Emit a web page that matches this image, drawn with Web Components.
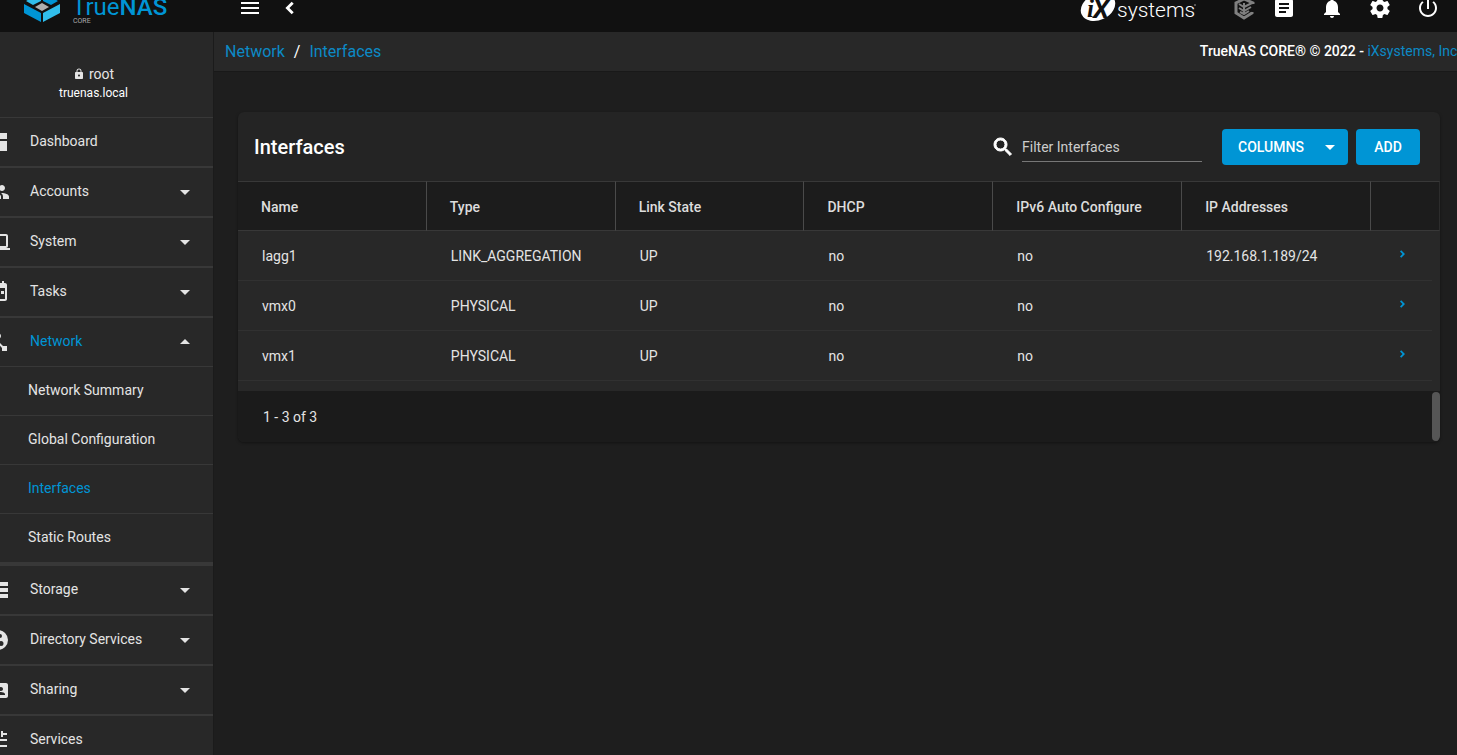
<!DOCTYPE html>
<html lang="en">
<head>
<meta charset="utf-8">
<title>TrueNAS - Interfaces</title>
<style>
  html, body { margin: 0; height: 100%; }
  body {
    --primary: #0095d5;
    --panel: #282828;
    --line: #383838;
    --fg: #e4e4e4;
    background: #1e1e1e; color: var(--fg);
    font: 14px/20px Roboto, "Liberation Sans", sans-serif;
    overflow: hidden;
  }
</style>
</head>
<body>
<nas-app>
  <nas-topbar slot="top"></nas-topbar>
  <nas-sidebar slot="side">
    <nas-item icon="dashboard" label="Dashboard"></nas-item>
    <nas-item icon="group" label="Accounts" menu></nas-item>
    <nas-item icon="laptop" label="System" menu></nas-item>
    <nas-item icon="calendar" label="Tasks" menu></nas-item>
    <nas-item icon="hub" label="Network" menu open>
      <nas-subitem>Network Summary</nas-subitem>
      <nas-subitem>Global Configuration</nas-subitem>
      <nas-subitem active>Interfaces</nas-subitem>
      <nas-subitem>Static Routes</nas-subitem>
    </nas-item>
    <nas-item icon="storage" label="Storage" menu></nas-item>
    <nas-item icon="directory" label="Directory Services" menu></nas-item>
    <nas-item icon="share" label="Sharing" menu></nas-item>
    <nas-item icon="tune" label="Services"></nas-item>
  </nas-sidebar>
  <nas-breadcrumb></nas-breadcrumb>
  <nas-table-card heading="Interfaces"></nas-table-card>
</nas-app>

<script>
const ICONS = {
  menu: 'M3 18h18v-2H3v2zm0-5h18v-2H3v2zm0-7v2h18V6H3z',
  back: 'M15.700 7.700L13.700 5.700 7.400 12l6.300 6.300 2-2L11.400 12z',
  next: 'M10.500 4.500L8 7l5 5-5 5 2.500 2.500L18 12z',
  task: 'M19 3h-4.180C14.400 1.840 13.300 1 12 1s-2.400.84-2.820 2H5c-1.100 0-2 .9-2 2v14c0 1.100.9 2 2 2h14c1.100 0 2-.9 2-2V5c0-1.100-.9-2-2-2zm-5 14H7v-2h7v2zm3-4H7v-2h10v2zm0-4H7V7h10v2z',
  bell: 'M12 22c1.100 0 2-.9 2-2h-4c0 1.100.89 2 2 2zm6-6v-5c0-3.070-1.640-5.640-4.500-6.320V4c0-.83-.67-1.500-1.500-1.500s-1.500.67-1.500 1.500v.68C7.630 5.360 6 7.920 6 11v5l-2 2v1h16v-1l-2-2z',
  gear: 'M19.43 12.98c.04-.32.07-.64.07-.98s-.03-.66-.07-.98l2.110-1.650c.19-.15.24-.42.12-.64l-2-3.460c-.12-.22-.39-.3-.61-.22l-2.490 1c-.52-.4-1.080-.73-1.690-.98l-.38-2.650C14.460 2.180 14.250 2 14 2h-4c-.25 0-.46.18-.49.42l-.38 2.650c-.61.25-1.170.59-1.690.98l-2.490-1c-.23-.09-.49 0-.61.22l-2 3.460c-.13.22-.07.49.12.64l2.110 1.650c-.04.32-.07.65-.07.98s.03.66.07.98l-2.110 1.650c-.19.15-.24.42-.12.64l2 3.460c.12.22.39.3.61.22l2.490-1c.52.4 1.080.73 1.690.98l.38 2.650c.03.24.24.42.49.42h4c.25 0 .46-.18.49-.42l.38-2.650c.61-.25 1.170-.59 1.690-.98l2.490 1c.23.09.49 0 .61-.22l2-3.460c.12-.22.07-.49-.12-.64l-2.110-1.650zM12 15.500c-1.930 0-3.500-1.570-3.500-3.500s1.570-3.500 3.500-3.500 3.500 1.570 3.500 3.500-1.570 3.500-3.500 3.500z',
  power: 'M13 3h-2v10h2V3zm4.830 2.170l-1.420 1.420C17.990 7.860 19 9.810 19 12c0 3.870-3.130 7-7 7s-7-3.130-7-7c0-2.190 1.010-4.140 2.580-5.420L6.170 5.170C4.230 6.820 3 9.260 3 12c0 4.970 4.030 9 9 9s9-4.030 9-9c0-2.740-1.230-5.180-3.170-6.830z',
  lock: 'M18 8h-1V6c0-2.760-2.240-5-5-5S7 3.240 7 6v2H6c-1.100 0-2 .9-2 2v10c0 1.100.9 2 2 2h12c1.100 0 2-.9 2-2V10c0-1.100-.9-2-2-2zm-6 9c-1.100 0-2-.9-2-2s.9-2 2-2 2 .9 2 2-.9 2-2 2zm3.100-9H8.900V6c0-1.710 1.390-3.100 3.100-3.100 1.710 0 3.100 1.390 3.100 3.100v2z',
  search: 'M15.500 14h-.79l-.28-.27C15.410 12.590 16 11.110 16 9.500 16 5.910 13.090 3 9.500 3S3 5.910 3 9.500 5.910 16 9.500 16c1.610 0 3.090-.59 4.230-1.570l.27.28v.79l5 4.990L20.490 19l-4.990-5zm-6 0C7.010 14 5 11.990 5 9.500S7.010 5 9.500 5 14 7.010 14 9.500 11.990 14 9.500 14z',
  down: 'M7 10l5 5 5-5z',
  up: 'M7 14l5-5 5 5z',
  dashboard: 'M3 13h8V3H3v10zm0 8h8v-6H3v6zm10 0h8V11h-8v10zm0-18v6h8V3h-8z',
  group: 'M16 11c1.660 0 2.990-1.340 2.990-3S17.660 5 16 5c-1.660 0-3 1.340-3 3s1.340 3 3 3zm-8 0c1.660 0 2.990-1.340 2.990-3S9.660 5 8 5C6.340 5 5 6.340 5 8s1.340 3 3 3zm0 2c-2.330 0-7 1.170-7 3.500V19h14v-2.500c0-2.330-4.670-3.500-7-3.500zm8 0c-.29 0-.62.020-.97.050 1.160.84 1.970 1.970 1.970 3.450V19h6v-2.500c0-2.330-4.670-3.500-7-3.500z',
  laptop: 'M20 18c1.100 0 2-.9 2-2V6c0-1.100-.9-2-2-2H4c-1.100 0-2 .9-2 2v10c0 1.100.9 2 2 2H0v2h24v-2h-4zM4 6h16v10H4V6z',
  calendar: 'M18 11h-3v3h3v-3zM16 1v2H8V1H6v2H5c-1.110 0-1.990.9-1.990 2L3 19c0 1.100.89 2 2 2h14c1.100 0 2-.9 2-2V5c0-1.100-.9-2-2-2h-1V1h-2zm3 18H5V8h14v11z',
  hub: 'M17 16l-4-4V8.820C14.160 8.400 15 7.300 15 6c0-1.660-1.340-3-3-3S9 4.340 9 6c0 1.300.84 2.400 2 2.820V12l-4 4H3v5h5v-3.050l4-4.200 4 4.200V21h5v-5h-4z',
  storage: 'M2 20h20v-4H2v4zm2-3h2v2H4v-2zM2 4v4h20V4H2zm4 3H4V5h2v2zm-4 7h20v-4H2v4zm2-3h2v2H4v-2z',
  directory: 'M12 2a10 10 0 1 0 0 20 10 10 0 0 0 0-20zm2 4a2 2 0 1 1 0 4 2 2 0 0 1 0-4zM8 7a2 2 0 1 1 0 4 2 2 0 0 1 0-4zm7 6a2.500 2.500 0 1 1 0 5 2.500 2.500 0 0 1 0-5z',
  share: 'M20 5h-9.120L8.880 3H4c-1.100 0-2 .9-2 2v13c0 1.100.9 2 2 2h16c1.100 0 2-.9 2-2V7c0-1.100-.9-2-2-2zm-5 4c1.100 0 2 .9 2 2s-.9 2-2 2-2-.9-2-2 .9-2 2-2zm4 8h-8v-1c0-1.330 2.670-2 4-2s4 .67 4 2v1z',
  tune: 'M3 17v2h6v-2H3zM3 5v2h10V5H3zm10 16v-2h8v-2h-8v-2h-2v6h2zM7 9v2H3v2h4v2h2V9H7zm14 4v-2H11v2h10zm-6-4h2V7h4V5h-4V3h-2v6z'
};

const define = (name, build) => customElements.define(name, class extends HTMLElement {
  connectedCallback() {
    if (this.shadowRoot) return;
    this.attachShadow({ mode: 'open' }).innerHTML = build(this);
  }
});

define('nas-icon', el => `
  <style>
    :host { display: inline-flex; flex: none; width: 24px; height: 24px; }
    svg { width: 100%; height: 100%; fill: currentColor; }
  </style>
  <svg viewBox="0 0 24 24" aria-hidden="true"><path d="${ICONS[el.getAttribute('name')]}"/></svg>`);

define('nas-app', () => `
  <style>
    :host { display: grid; grid-template: auto 1fr / 214px minmax(0, 1fr); height: 100vh; overflow: hidden; }
    header { grid-column: 1 / -1; }
    aside { overflow: hidden; box-sizing: border-box; background: var(--panel); border-right: 1px solid #1b1b1b; }
  </style>
  <header><slot name="top"></slot></header>
  <aside><slot name="side"></slot></aside>
  <main><slot></slot></main>`);

define('nas-topbar', () => `
  <style>
    :host { display: flex; align-items: center; height: 48px; margin-top: -16px; background: #111; color: #fff; }
    button { display: flex; padding: 0; border: 0; background: none; color: inherit; }
    .brand { display: flex; width: 238px; flex: none; text-decoration: none; }
    .tools { display: flex; gap: 16px; }
    .right { display: flex; align-items: center; gap: 24px; margin-left: auto; padding-right: 17px; }
    .command { margin-right: -8px; }
    svg { display: block; }
  </style>
  <a class="brand" href="#" aria-label="TrueNAS CORE home">
    <svg width="180" height="48" viewBox="0 -16 180 48">
      <path fill="#31beec" d="M41-8v9l-8 4-7-4zM60 4v9L43 22v-9z"/>
      <path fill="#0095d5" d="M43-8v9l8 4 7-4zM24 4v9l17 9v-9z"/>
      <path fill="#aeaeae" d="m35 7 7-4 7 4-7 4z"/>
      <text x="72" y="15" font-size="24" fill="#0095d5" font-family="Roboto, sans-serif">True<tspan font-weight="500">NAS</tspan></text>
      <text x="73" y="23" font-size="7" fill="#aaa" font-family="Roboto, sans-serif">CORE</text>
    </svg>
  </a>
  <div class="tools">
    <button aria-label="Toggle menu"><nas-icon name="menu"></nas-icon></button>
    <button aria-label="Collapse menu"><nas-icon name="back"></nas-icon></button>
  </div>
  <div class="right">
    <svg width="128" height="48" viewBox="1080 -16 128 48" role="img" aria-label="iXsystems">
      <ellipse cx="1098" cy="7" rx="18" ry="13" fill="#fff" transform="rotate(-25 1098 7)"/>
      <text x="1087" y="17" font-size="25" font-weight="700" font-style="italic" fill="#111" font-family="Liberation Serif, serif">i</text>
      <text x="1093" y="18" font-size="26" font-weight="700" font-style="italic" fill="#111" font-family="Roboto, sans-serif">X</text>
      <text x="1117" y="17" font-size="21" font-weight="300" fill="#fff" font-family="Roboto, sans-serif">systems</text>
      <path d="M1194 5h2" stroke="#999"/>
    </svg>
    <button class="command" aria-label="TrueCommand"><svg width="24" height="24" viewBox="0 0 24 24" fill="none" stroke="#808080"><path stroke-width="3" d="M21 8V7l-9-4-8 4v10l8 5 8-5v-1"/><path stroke-width="2" d="M12 7v12M7 8l5 3 8-4M7 12l5 3 7-4M8 16l4 2 5-3"/></svg></button>
    <button aria-label="Tasks"><nas-icon name="task"></nas-icon></button>
    <button aria-label="Alerts"><nas-icon name="bell"></nas-icon></button>
    <button aria-label="Settings"><nas-icon name="gear"></nas-icon></button>
    <button aria-label="Power"><nas-icon name="power"></nas-icon></button>
  </div>`);

define('nas-sidebar', () => `
  <style>
    :host { display: block; margin-left: -14px; }
    .user { display: flex; flex-direction: column; align-items: center; height: 86px; padding: 32px 12px 0 0; box-sizing: border-box; border-bottom: 1px solid var(--line); }
    .name { display: flex; align-items: center; gap: 4px; }
    .name nas-icon { width: 12px; height: 12px; }
    .host { font-size: 12px; line-height: 18px; color: #fff; }
  </style>
  <div class="user">
    <div class="name"><nas-icon name="lock"></nas-icon><span>root</span></div>
    <div class="host">truenas.local</div>
  </div>
  <nav><slot></slot></nav>`);

define('nas-item', el => {
  const open = el.hasAttribute('open');
  return `
  <style>
    :host { display: block; }
    button { display: flex; align-items: center; width: 100%; height: 50px; padding: 0 16px 0 0; box-sizing: border-box; border: 0; border-bottom: 2px solid var(--line); background: none; color: inherit; font: inherit; text-align: left; }
    .label { flex: 1; padding: 0 0 2px 20px; }
    .open { height: 49px; border-bottom-width: 1px; }
    .open .label { color: var(--primary); }
    .sub { border-bottom: 3px solid var(--line); }
  </style>
  <button class="${open ? 'open' : ''}"><nas-icon name="${el.getAttribute('icon')}"></nas-icon><span class="label">${el.getAttribute('label')}</span>${el.hasAttribute('menu') ? `<nas-icon name="${open ? 'up' : 'down'}"></nas-icon>` : ''}</button>
  ${open ? '<div class="sub"><slot></slot></div>' : ''}`;
});

define('nas-subitem', el => `
  <style>
    :host { display: block; }
    a { display: flex; align-items: center; height: 49px; padding: 0 0 2px 42px; box-sizing: border-box; border-bottom: 1px solid var(--line); color: ${el.hasAttribute('active') ? 'var(--primary)' : 'inherit'}; text-decoration: none; }
  </style>
  <a href="#"><slot></slot></a>`);

define('nas-breadcrumb', () => `
  <style>
    :host { display: flex; justify-content: space-between; height: 40px; line-height: 40px; padding-left: 11px; box-sizing: border-box; background: var(--panel); border-bottom: 1px solid #191919; overflow: hidden; white-space: nowrap; }
    a { color: #0c8ac6; text-decoration: none; }
    nav { display: flex; gap: 9px; font-size: 16px; }
    nav span, .copy { color: #fff; }
    .copy { font-weight: 500; line-height: 38px; margin-right: -4px; }
    .copy a { font-weight: 400; }
  </style>
  <nav><a href="#">Network</a><span>/</span><a href="#">Interfaces</a></nav>
  <div class="copy">TrueNAS CORE® © 2022 - <a href="#">iXsystems, Inc.</a></div>`);

define('nas-table-card', el => {
  const cols = ['Name', 'Type', 'Link State', 'DHCP', 'IPv6 Auto Configure', 'IP Addresses'];
  const rows = [
    ['lagg1', 'LINK_AGGREGATION', 'UP', 'no', 'no', '192.168.1.189/24'],
    ['vmx0', 'PHYSICAL', 'UP', 'no', 'no', ''],
    ['vmx1', 'PHYSICAL', 'UP', 'no', 'no', '']
  ];
  return `
  <style>
    :host { display: block; margin: 40px 17px 0 24px; border-radius: 6px; background: #242424; overflow: hidden; box-shadow: 0 1px 3px #0006; }
    .head { display: flex; align-items: center; height: 69px; padding: 0 20px 0 16px; }
    h1 { flex: 1; margin: 0; font-size: 20px; line-height: 24px; font-weight: 500; color: #fff; }
    .filter { display: flex; align-items: center; gap: 7px; margin-right: 20px; color: #fff; }
    input { width: 180px; height: 30px; padding: 1px 0 0; box-sizing: border-box; border: 0; border-bottom: 1px solid #777; background: none; color: inherit; font: inherit; outline: 0; }
    input::placeholder { color: #ccc; opacity: 1; }
    .filter nas-icon { stroke: #fff; stroke-width: 1px; }
    button.main { display: flex; align-items: center; height: 36px; padding: 0 16px; border: 0; border-radius: 4px; background: var(--primary); color: #fff; font: 500 14px/20px Roboto, sans-serif; }
    .columns { justify-content: space-between; width: 126px; margin-right: 8px; }
    .columns nas-icon { margin-right: -10px; }
    .add { justify-content: center; width: 64px; }
    table { width: 100%; table-layout: fixed; border-collapse: separate; border-spacing: 0; background: var(--panel); padding-bottom: 10px; }
    th:last-child { width: 69px; }
    th, td { box-sizing: border-box; height: 50px; padding: 0 0 0 24px; text-align: left; border-bottom: 1px solid #313131; }
    th { padding: 2px 0 0 23px; background: #1c1c1c; font-weight: 500; color: #ddd; border-top: 1px solid var(--line); border-right: 1px solid #4a4a4a; border-bottom-color: var(--line); }
    th:last-child { border-right-color: #2c2c2c; }
    td:last-child { padding: 0 0 4px 23px; border: 0; background: linear-gradient(#313131, #313131) left bottom / calc(100% - 8px) 1px no-repeat; }
    td button { display: flex; padding: 0; border: 0; background: none; color: var(--primary); }
    td nas-icon { width: 16px; height: 12px; }
    .foot { display: flex; justify-content: space-between; align-items: center; height: 51px; padding-left: 25px; background: #1b1b1b; }
    .thumb { width: 8px; height: 49px; border-radius: 4px; background: #565656; }
  </style>
  <div class="head">
    <h1>${el.getAttribute('heading')}</h1>
    <label class="filter"><nas-icon name="search"></nas-icon><input type="text" placeholder="Filter Interfaces" aria-label="Filter Interfaces"></label>
    <button class="main columns">COLUMNS<nas-icon name="down"></nas-icon></button>
    <button class="main add">ADD</button>
  </div>
  <table>
    <thead><tr>${cols.map(c => `<th scope="col">${c}</th>`).join('')}<th></th></tr></thead>
    <tbody>${rows.map(r => `<tr>${r.map(c => `<td>${c}</td>`).join('')}<td><button aria-label="Expand ${r[0]}"><nas-icon name="next"></nas-icon></button></td></tr>`).join('')}</tbody>
  </table>
  <div class="foot"><span>1 - 3 of 3</span><div class="thumb"></div></div>`;
});
</script>
</body>
</html>
